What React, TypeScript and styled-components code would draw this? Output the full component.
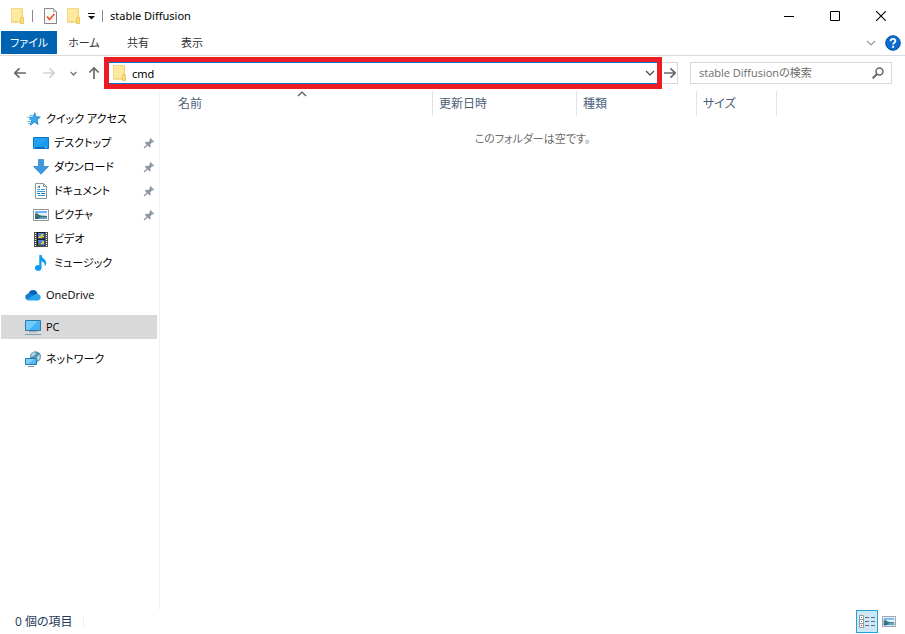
import React from "react";
import styled, { createGlobalStyle } from "styled-components";

const GlobalStyle = createGlobalStyle`
  *, *::before, *::after { box-sizing: border-box; }
  body {
    margin: 0;
    background: #fff;
    color: #000;
    font-family: "Open Sans", "Noto Sans CJK JP", sans-serif;
    font-size: 12px;
    line-height: 16px;
  }
  button, input { font: inherit; color: inherit; }
  svg { display: block; flex: none; }
`;

const Window = styled.div`
  display: flex;
  flex-direction: column;
  min-height: 100vh;
`;

const TitleBar = styled.header`
  display: flex;
  align-items: center;
  height: 31px;
  padding-left: 9px;
  padding-right: 1px;
`;

const PlainButton = styled.button`
  display: flex;
  align-items: center;
  justify-content: center;
  flex: none;
  margin: 0;
  padding: 0;
  border: 0;
  background: transparent;
`;

const QuickButton = styled(PlainButton)<{ $width?: number }>`
  width: ${(p) => p.$width ?? 22}px;
  height: 22px;
`;

const TitleDivider = styled.span<{ $space: number }>`
  width: 1px;
  height: 12px;
  margin: 0 ${(p) => p.$space}px;
  background: #8a8a8a;
`;

const Title = styled.h1`
  flex: 1;
  margin: 0;
  padding-left: 3px;
  font-size: 11px;
  font-weight: 400;
  font-family: "Noto Sans", sans-serif;
`;

const CaptionButton = styled(PlainButton)`
  width: 46px;
  height: 31px;
`;

const Ribbon = styled.nav`
  display: flex;
  align-items: stretch;
  height: 25px;
  padding-left: 1px;
  padding-right: 1px;
  border-bottom: 1px solid #dadbdc;
`;

const Tab = styled(PlainButton)<{ $file?: boolean }>`
  width: ${(p) => (p.$file ? 56 : 54)}px;
  height: 23px;
  color: ${(p) => (p.$file ? "#fff" : "#333")};
  background: ${(p) => (p.$file ? "#0063b1" : "transparent")};
  font-size: 11px;
  font-feature-settings: "palt";
`;

const Spacer = styled.div`
  flex: 1;
`;

const RibbonTool = styled(PlainButton)`
  width: 22px;
  height: 24px;
`;

const NavBar = styled.div`
  display: flex;
  align-items: center;
  height: 34px;
  padding-left: 8px;
  padding-right: 13px;
`;

const Arrows = styled.div`
  display: flex;
  width: 96px;
`;

const ArrowButton = styled(PlainButton)<{ $width: number }>`
  width: ${(p) => p.$width}px;
  height: 22px;
`;

const AddressFrame = styled.div`
  flex: 1;
  border: 5px solid #ed1c24;
`;

const Address = styled.label`
  display: flex;
  align-items: center;
  height: 22px;
  padding-left: 2px;
  border: solid #0078d7;
  border-width: 1px 0;
`;

const AddressInput = styled.input`
  flex: 1;
  min-width: 0;
  margin-left: 5px;
  padding: 2px 0 0;
  border: 0;
  outline: 0;
  font-size: 11px;
  font-family: "Noto Sans", sans-serif;
`;

const GoButton = styled(PlainButton)`
  width: 16px;
  height: 22px;
  border: 1px solid #d9d9d9;
  border-left: 0;
`;

const Search = styled.label`
  display: flex;
  align-items: center;
  width: 202px;
  height: 22px;
  margin-left: 12px;
  padding: 0 7px 0 8px;
  border: 1px solid #d9d9d9;
`;

const SearchInput = styled.input`
  flex: 1;
  min-width: 0;
  padding: 0;
  border: 0;
  outline: 0;
  font-size: 11px;
  font-feature-settings: "palt";
  &::placeholder { color: #6d6d6d; opacity: 1; }
`;

const Body = styled.div`
  display: flex;
  flex: 1;
`;

const Sidebar = styled.aside`
  width: 160px;
  padding: 17px 2px 0 1px;
  border-right: 1px solid #f3f3f3;
`;

const TreeGroup = styled.ul`
  margin: 0 0 8px;
  padding: 0;
  list-style: none;
`;

const TreeItem = styled.a<{ $nested?: boolean; $selected?: boolean }>`
  display: flex;
  align-items: center;
  gap: 5px;
  height: 24px;
  padding-left: ${(p) => (p.$nested ? 32 : 24)}px;
  padding-right: 2px;
  color: #000;
  background: ${(p) => (p.$selected ? "#d9d9d9" : "transparent")};
  font-size: 11px;
  font-feature-settings: "palt";
  text-decoration: none;
  white-space: nowrap;
`;

const ItemName = styled.span`
  flex: 1;
`;

const Files = styled.main`
  flex: 1;
  min-width: 0;
`;

const FileTable = styled.table`
  width: 100%;
  table-layout: fixed;
  border-collapse: collapse;
`;

const Column = styled.col<{ $width?: number }>`
  width: ${(p) => (p.$width ? `${p.$width}px` : "auto")};
`;

const HeadCell = styled.th<{ $first?: boolean }>`
  height: 28px;
  padding: 1px 0 2px;
  padding-left: ${(p) => (p.$first ? 12 : 0)}px;
  font-weight: 400;
`;

const HeadButton = styled(PlainButton)`
  position: relative;
  justify-content: flex-start;
  width: 100%;
  height: 25px;
  padding-left: 6px;
  border-right: 1px solid #e3e3e3;
  color: #4c607a;
  font-feature-settings: "palt";
`;

const SortMark = styled.span`
  position: absolute;
  top: -2px;
  left: 0;
  right: 0;
  display: flex;
  justify-content: center;
`;

const EmptyCell = styled.td`
  padding: 13px 0;
  color: #6d6d6d;
  font-size: 11px;
  font-feature-settings: "palt";
  text-align: center;
`;

const StatusBar = styled.footer`
  display: flex;
  align-items: center;
  height: 24px;
  padding-left: 15px;
  padding-right: 5px;
  padding-bottom: 1px;
`;

const Count = styled.span`
  padding-right: 10px;
  border-right: 1px solid #f0f0f0;
  color: #1e395b;
  font-size: 12px;
  font-feature-settings: "palt";
  line-height: 12px;
`;

const ViewButton = styled(PlainButton)<{ $active?: boolean }>`
  width: 22px;
  height: 23px;
  border: 1px solid ${(p) => (p.$active ? "#26a0da" : "transparent")};
  background: ${(p) => (p.$active ? "#cce8f6" : "transparent")};
`;

const FolderIcon = () => (
  <svg width="16" height="16" viewBox="0 0 16 16" aria-hidden="true">
    <path d="M2.500.5h11v13.500h-11z" fill="#ffe89f" stroke="#f8d983" />
    <path d="M11.500 9.500h3v6h-3z" fill="#fbdc7c" stroke="#edc65c" />
    <path d="M13.500 1v8" stroke="#f3cf6d" />
    <path d="M2.500 14h9" stroke="#f3cf6d" />
  </svg>
);

const PropertiesIcon = () => (
  <svg width="14" height="16" viewBox="0 0 14 16" aria-hidden="true">
    <path d="M.5.500h9l3 3v12h-12z" fill="#f9f9fa" stroke="#85878a" />
    <path d="M9.500.5v3h3" fill="#ddd" stroke="#999" strokeWidth=".8" />
    <path d="M3 8.500l2.500 3 5-5.500" fill="none" stroke="#ea5426" strokeWidth="1.700" />
  </svg>
);

const CustomizeIcon = () => (
  <svg width="7" height="8" viewBox="0 0 7 8" aria-hidden="true">
    <path d="M0 1.500h7" stroke="#111" />
    <path d="M0 4h7L3.500 7.500z" fill="#111" />
  </svg>
);

const MinimizeIcon = () => (
  <svg width="10" height="10" viewBox="0 0 10 10" aria-hidden="true"><path d="M0 5.500h10" stroke="#000" /></svg>
);
const MaximizeIcon = () => (
  <svg width="10" height="10" viewBox="0 0 10 10" aria-hidden="true"><path d="M.5.5h9v9h-9z" fill="none" stroke="#000" /></svg>
);
const CloseIcon = () => (
  <svg width="10" height="10" viewBox="0 0 10 10" aria-hidden="true"><path d="M0 0l10 10M10 0L0 10" stroke="#000" strokeWidth="1.100" /></svg>
);

const Chevron = ({ size, color, up }: { size: number; color: string; up?: boolean }) => (
  <svg width={size} height={size} viewBox="0 0 10 10" aria-hidden="true">
    <path d={up ? "M1 7l4-4 4 4" : "M1 3l4 4 4-4"} fill="none" stroke={color} strokeWidth={size < 8 ? 2 : 1.2} />
  </svg>
);

const HelpIcon = () => (
  <svg width="16" height="16" viewBox="0 0 16 16" aria-hidden="true">
    <circle cx="8" cy="8" r="7.300" fill="#0a6ccf" stroke="#0a4f9e" />
    <path d="M5.700 6.200C5.700 3.200 10.400 3.300 10.400 6c0 1.700-2.300 1.700-2.300 3.600" fill="none" stroke="#fff" strokeWidth="1.800" />
    <path d="M7.100 10.800h2v2h-2z" fill="#fff" />
  </svg>
);

const ArrowIcon = ({ turn = 0, color = "#6a6a6a" }: { turn?: number; color?: string }) => (
  <svg width="12" height="12" viewBox="0 0 12 12" aria-hidden="true">
    <g transform={`rotate(${turn} 6 6)`} fill="none" stroke={color} strokeWidth="1.700">
      <path d="M0 6h11M6.500 1.300L11.200 6l-4.700 4.700" />
    </g>
  </svg>
);

const SearchIcon = () => (
  <svg width="12" height="12" viewBox="0 0 12 12" aria-hidden="true">
    <circle cx="7.500" cy="4.500" r="3.500" fill="none" stroke="#666" strokeWidth="1.500" />
    <path d="M5 7L.7 11.300" stroke="#666" strokeWidth="2" />
  </svg>
);

const StarIcon = () => (
  <svg width="16" height="16" viewBox="0 0 16 16" aria-hidden="true">
    <path d="M9.800 1.800l1.200 4 4.300.2-3.300 2.800 1.100 4.700-3.600-2.500-4.200 3.100 1.600-5L4.200 6.200h4.100z" fill="#37a9ee" stroke="#1c86cf" strokeWidth=".9" />
    <path d="M4.500 4.300h3.500M2.500 6.500h3M4 8.500h2.500M2.500 10.500h3M3 12.500h2" stroke="#4bb0ea" strokeWidth=".9" />
  </svg>
);

const DesktopIcon = () => (
  <svg width="16" height="16" viewBox="0 0 16 16" aria-hidden="true">
    <path d="M.5 2.500h15v11H.5z" fill="#22a2f5" stroke="#0a76c8" />
    <path d="M15 3v9H5z" fill="#149af0" />
    <path d="M1 12.500h14" stroke="#0a69b7" />
    <path d="M1 12.500h1M12 12.500h2" stroke="#72cafc" />
  </svg>
);

const DownloadIcon = () => (
  <svg width="16" height="16" viewBox="0 0 16 16" aria-hidden="true">
    <path d="M5.500.5h5v7h5L8 15.200.5 7.500h5z" fill="#3f97de" stroke="#3485c9" strokeWidth=".8" />
  </svg>
);

const DocumentIcon = () => (
  <svg width="16" height="16" viewBox="0 0 16 16" aria-hidden="true">
    <path d="M2.500.5h8l3 3v12h-11z" fill="#fff" stroke="#8b979f" />
    <path d="M10.500.5v3h3" fill="none" stroke="#8b979f" />
    <path d="M4 6.500h3M8 6.500h4M4 8.500h8M5 12.500h7" stroke="#3d9be0" />
    <path d="M4 10.500h3M8 10.500h4M4.500 4.500l2-1.500v2" fill="none" stroke="#1d73b5" />
  </svg>
);

const PictureIcon = ({ small }: { small?: boolean }) => (
  <svg width={small ? 14 : 16} height={small ? 11 : 12} viewBox="0 0 16 12" preserveAspectRatio="none" aria-hidden="true">
    <path d="M.5.5h15v11H.5z" fill="#fff" stroke="#8f969b" />
    <path d="M2 2h12v8H2z" fill="#75b5f0" />
    <path d="M5 4h9v3H6z" fill="#e3f1fb" />
    <path d="M2 4.500c2 0 4 1.500 6 2L14 7v1H2z" fill="#3d7168" />
    <path d="M2 8h12v2H2z" fill="#5e9fc4" />
    <path d="M2 8h6l-3 2H2z" fill="#2c6480" />
  </svg>
);

const VideoIcon = () => (
  <svg width="16" height="16" viewBox="0 0 16 16" aria-hidden="true">
    <path d="M1 1h14v15H1z" fill="#4a4a4c" />
    <path d="M4 1h8v14H4z" fill="#171b28" />
    <path d="M5 2h6.500v5.500H5zM5 9h6.500v5.500H5z" fill="#4d83da" />
    <path d="M6 5h2V3h2v2h1v2H5zM7 12h2v-2h2v3H7z" fill="#e6c33d" />
    <path d="M9 6h2v1H9zM5 12h3v2H5z" fill="#498448" />
    <path d="M2.500 2v13M13.500 2v13" stroke="#fff" strokeWidth="1.200" strokeDasharray="1 1" />
  </svg>
);

const MusicIcon = () => (
  <svg width="16" height="16" viewBox="0 0 16 16" aria-hidden="true">
    <ellipse cx="5.200" cy="12.900" rx="3.200" ry="2.800" fill="#0c9af2" />
    <path d="M6.300 0h2.200c0 3.500 4.700 4 4.700 8 0 1.500-.6 2.700-1.400 3.500.5-3-1-4.400-3.300-5.200V13H6.300z" fill="#0c9af2" />
  </svg>
);

const OneDriveIcon = () => (
  <svg width="16" height="16" viewBox="0 0 16 16" aria-hidden="true">
    <path d="M3.500 6.500C4 3.800 7.500 2 10.200 3.500c1.300.6 2 1.800 2.300 3.200L8 10z" fill="#0562b8" />
    <path d="M3 13C-.6 13-.8 7 3.500 6.500c2-.3 3 .3 4.500 1.200L6 13z" fill="#1080d2" />
    <path d="M3 13.500h9.500c4-.2 4.200-6 .3-6.500C10.500 6.600 9 8 7.500 9L2 12.800z" fill="#27a5ee" />
  </svg>
);

const PcIcon = () => (
  <svg width="16" height="16" viewBox="0 0 16 16" aria-hidden="true">
    <path d="M.5 1.500h15v10H.5z" fill="#43b3f6" stroke="#33799f" />
    <path d="M1 2h12L4 11H1z" fill="#72cbfb" />
    <path d="M4 12.800h8" stroke="#8da0ae" />
    <path d="M0 15.500h16" stroke="#7c9db8" />
  </svg>
);

const NetworkIcon = () => (
  <svg width="16" height="16" viewBox="0 0 16 16" aria-hidden="true">
    <circle cx="10.500" cy="5.700" r="5.500" fill="#5590ae" />
    <path d="M6.500 2.500c2-2 4.500-1.500 4.500.5L9 5 6 6zM11.500 6l3-2.500 1 3-2 3-2-1z" fill="#a9d3e0" />
    <path d="M.5 7.500h11v6H.5z" fill="#50baf5" stroke="#247aaf" />
    <path d="M1 8h8l-5 5H1z" fill="#7acffb" />
    <path d="M3 15.500h6" stroke="#7897ad" />
  </svg>
);

const PinIcon = () => (
  <svg width="12" height="12" viewBox="0 0 12 12" aria-hidden="true">
    <path d="M7.500 1L11 4.500l-1 1-.7-.2-2 2 .2 2.200-1 1L1.800 5.800l1-1 2.300.2 2-2L6.500 2z" fill="#8c9aa6" />
    <path d="M4.500 7.500L1 11" stroke="#8c9aa6" strokeWidth="1.300" />
  </svg>
);

const DetailsIcon = () => (
  <svg width="16" height="13" viewBox="0 0 16 13" aria-hidden="true">
    <path d="M.5.5h4v12h-4zM.5 4.500h4M.5 8.500h4" fill="#fff" stroke="#999" />
    <path d="M2 2h1v1H2z" fill="#3d7d6b" />
    <path d="M2 6h1v1H2z" fill="#3b83cc" />
    <path d="M2 10h1v1H2z" fill="#c22" />
    <path d="M6 2.500h4M12 2.500h4M6 6.500h4M12 6.500h4M6 10.500h4M12 10.500h4" stroke="#65727b" />
  </svg>
);

const quickAccess = [
  { name: "デスクトップ", Icon: DesktopIcon, pinned: true },
  { name: "ダウンロード", Icon: DownloadIcon, pinned: true },
  { name: "ドキュメント", Icon: DocumentIcon, pinned: true },
  { name: "ピクチャ", Icon: PictureIcon, pinned: true },
  { name: "ビデオ", Icon: VideoIcon, pinned: false },
  { name: "ミュージック", Icon: MusicIcon, pinned: false },
];

const roots = [
  { name: "OneDrive", Icon: OneDriveIcon },
  { name: "PC", Icon: PcIcon, selected: true },
  { name: "ネットワーク", Icon: NetworkIcon },
];

export default function App() {
  return (
    <Window lang="ja">
      <GlobalStyle />
      <TitleBar>
        <QuickButton as="span" $width={16}><FolderIcon /></QuickButton>
        <TitleDivider $space={7} />
        <QuickButton aria-label="プロパティ"><PropertiesIcon /></QuickButton>
        <QuickButton aria-label="新しいフォルダー"><FolderIcon /></QuickButton>
        <QuickButton aria-label="クイック アクセス ツール バーのカスタマイズ" $width={14}><CustomizeIcon /></QuickButton>
        <TitleDivider $space={4} />
        <Title>stable Diffusion</Title>
        <CaptionButton aria-label="最小化"><MinimizeIcon /></CaptionButton>
        <CaptionButton aria-label="最大化"><MaximizeIcon /></CaptionButton>
        <CaptionButton aria-label="閉じる"><CloseIcon /></CaptionButton>
      </TitleBar>

      <Ribbon>
        <Tab $file>ファイル</Tab>
        <Tab>ホーム</Tab>
        <Tab>共有</Tab>
        <Tab>表示</Tab>
        <Spacer />
        <RibbonTool aria-label="リボンの展開"><Chevron size={10} color="#999" /></RibbonTool>
        <RibbonTool aria-label="ヘルプ"><HelpIcon /></RibbonTool>
      </Ribbon>

      <NavBar>
        <Arrows>
          <ArrowButton $width={24} aria-label="戻る"><ArrowIcon turn={180} /></ArrowButton>
          <ArrowButton $width={34} aria-label="進む"><ArrowIcon color="#d2d2d2" /></ArrowButton>
          <ArrowButton $width={14} aria-label="最近表示した場所"><Chevron size={7} color="#777" /></ArrowButton>
          <ArrowButton $width={28} aria-label="上へ"><ArrowIcon turn={270} /></ArrowButton>
        </Arrows>
        <AddressFrame>
          <Address>
            <FolderIcon />
            <AddressInput aria-label="アドレス" defaultValue="cmd" />
            <ArrowButton $width={14} aria-label="以前の場所"><Chevron size={10} color="#444" /></ArrowButton>
          </Address>
        </AddressFrame>
        <GoButton aria-label="移動"><ArrowIcon /></GoButton>
        <Search>
          <SearchInput type="search" aria-label="検索" placeholder="stable Diffusionの検索" />
          <SearchIcon />
        </Search>
      </NavBar>

      <Body>
        <Sidebar>
          <TreeGroup>
            <li>
              <TreeItem href="#quick"><StarIcon /><ItemName>クイック アクセス</ItemName></TreeItem>
            </li>
            {quickAccess.map(({ name, Icon, pinned }) => (
              <li key={name}>
                <TreeItem href="#folder" $nested>
                  <Icon /><ItemName>{name}</ItemName>{pinned && <PinIcon />}
                </TreeItem>
              </li>
            ))}
          </TreeGroup>
          {roots.map(({ name, Icon, selected }) => (
            <TreeGroup key={name}>
              <li>
                <TreeItem href="#root" $selected={selected}><Icon /><ItemName>{name}</ItemName></TreeItem>
              </li>
            </TreeGroup>
          ))}
        </Sidebar>
        <Files>
          <FileTable>
            <colgroup>
              <Column $width={273} />
              <Column $width={144} />
              <Column $width={120} />
              <Column $width={80} />
              <Column />
            </colgroup>
            <thead>
              <tr>
                <HeadCell $first aria-sort="ascending">
                  <HeadButton>名前<SortMark><Chevron up size={10} color="#555" /></SortMark></HeadButton>
                </HeadCell>
                <HeadCell><HeadButton>更新日時</HeadButton></HeadCell>
                <HeadCell><HeadButton>種類</HeadButton></HeadCell>
                <HeadCell><HeadButton>サイズ</HeadButton></HeadCell>
                <td />
              </tr>
            </thead>
            <tbody>
              <tr><EmptyCell colSpan={5}>このフォルダーは空です。</EmptyCell></tr>
            </tbody>
          </FileTable>
        </Files>
      </Body>

      <StatusBar>
        <Count>0 個の項目</Count>
        <Spacer />
        <ViewButton $active aria-label="詳細"><DetailsIcon /></ViewButton>
        <ViewButton aria-label="大アイコン"><PictureIcon small /></ViewButton>
      </StatusBar>
    </Window>
  );
}
